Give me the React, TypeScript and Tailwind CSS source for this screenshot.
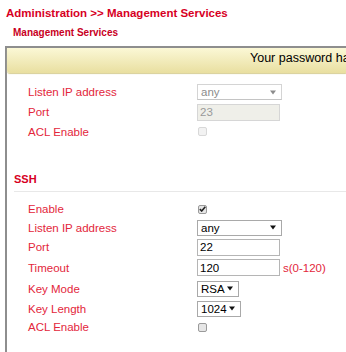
import React from 'react'

const Arrow = ({ color }: { color: string }) => (
  <svg width="6" height="5" viewBox="0 0 6 5" className="shrink-0">
    <path d="M0 0.5 L6 0.5 L3 4.5 Z" fill={color} />
  </svg>
)

const Row = ({ label, h, children }: { label: string; h: string; children?: React.ReactNode }) => (
  <div className={`flex items-center ${h}`}>
    <span className="w-[169px] shrink-0 text-[11.5px] leading-[14px] text-[#e3263b]">{label}</span>
    {children}
  </div>
)

const Select = ({ value, w, disabled }: { value: string; w: string; disabled?: boolean }) => (
  <div
    className={`flex h-[16px] items-center justify-between border bg-white pl-[3px] pr-[5px] text-[11.5px] leading-[14px] ${w} ${
      disabled
        ? 'border-[#d4d4d4] border-b-[#c4c4c4] text-[#8c8c8c]'
        : 'border-[#a9a9a9] text-black'
    }`}
  >
    <span>{value}</span>
    <Arrow color={disabled ? '#8c8c8c' : '#111'} />
  </div>
)

const TextBox = ({ value, disabled }: { value: string; disabled?: boolean }) => (
  <div
    className={`flex h-[17px] w-[83px] items-center border pl-[2px] text-[11.5px] leading-[14px] ${
      disabled ? 'border-[#d6d6d6] bg-[#efefe9] text-[#9a9a9a]' : 'border-[#b5b5b5] bg-white text-black'
    }`}
  >
    {value}
  </div>
)

const Check = ({ checked, disabled }: { checked?: boolean; disabled?: boolean }) => (
  <div
    className={`ml-[1px] flex h-[9px] w-[9px] items-center justify-center rounded-[2px] border ${
      disabled ? 'border-[#d8d8d8] bg-[#f2f2f2]' : 'border-[#9a9a9a] bg-[#e6e6e6]'
    }`}
  >
    {checked && (
      <svg width="7" height="6" viewBox="0 0 7 6">
        <path d="M0.8 3.2 L2.7 5 L6.3 0.8" stroke="#222" strokeWidth="1.6" fill="none" />
      </svg>
    )}
  </div>
)

export default function App() {
  return (
    <div className="h-[352px] w-[346px] overflow-hidden bg-white font-['Liberation_Sans',Arial,sans-serif]">
      <div className="pl-[6px] pt-[6px] text-[11.5px] font-bold leading-[14px] text-[#d7001f]">
        Administration &gt;&gt; Management Services
      </div>
      <div className="mt-[7px] pl-[13px] text-[10px] font-bold leading-[12px] text-[#c8001e]">
        Management Services
      </div>

      <div className="ml-[5px] mt-[7px] h-[320px] border-l-2 border-t-2 border-[#8e8e8e]">
        <div className="h-[25px] overflow-hidden whitespace-nowrap rounded-bl-[3px] bg-gradient-to-b from-[#fbf8d6] to-[#e9dfa0] pl-[243px] pt-[1.5px] text-[12.5px] leading-[16px] text-black shadow-[0_1px_1px_#d8cf96]">
          Your password has not been changed
        </div>

        <div className="mt-[9px] pl-[21px]">
          <Row label="Listen IP address" h="h-[20px]">
            <Select value="any" w="w-[85px]" disabled />
          </Row>
          <Row label="Port" h="h-[20px]">
            <TextBox value="23" disabled />
          </Row>
          <Row label="ACL Enable" h="h-[19px]">
            <Check disabled />
          </Row>
        </div>

        <div className="ml-[7px] mt-[32px] border-b border-[#e8e8e8] pb-[5px] text-[11px] font-bold leading-[13px] text-[#d7001f]">
          SSH
        </div>

        <div className="mt-[8px] pl-[21px]">
          <Row label="Enable" h="h-[18px]">
            <Check checked />
          </Row>
          <Row label="Listen IP address" h="h-[19px]">
            <Select value="any" w="w-[85px]" />
          </Row>
          <Row label="Port" h="h-[20px]">
            <TextBox value="22" />
          </Row>
          <Row label="Timeout" h="h-[21px]">
            <TextBox value="120" />
            <span className="ml-[3px] text-[11.5px] leading-[14px] text-[#e3263b]">s(0-120)</span>
          </Row>
          <Row label="Key Mode" h="h-[21px]">
            <Select value="RSA" w="w-[42px]" />
          </Row>
          <Row label="Key Length" h="h-[19px]">
            <Select value="1024" w="w-[44px]" />
          </Row>
          <Row label="ACL Enable" h="h-[18px]">
            <Check />
          </Row>
        </div>
      </div>
    </div>
  )
}
